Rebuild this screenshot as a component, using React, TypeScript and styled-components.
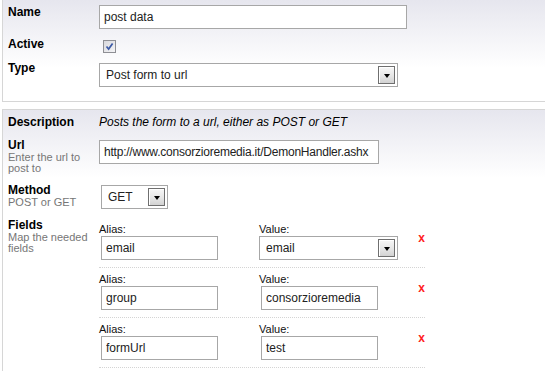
import React from 'react';
import styled, { createGlobalStyle } from 'styled-components';

type FieldMapping = {
  alias: string;
  value: string;
  isSelect?: boolean;
};

const fields: FieldMapping[] = [
  { alias: 'email', value: 'email', isSelect: true },
  { alias: 'group', value: 'consorzioremedia' },
  { alias: 'formUrl', value: 'test' },
];

const GlobalStyle = createGlobalStyle`
  html, body {
    margin: 0;
    padding: 0;
    background: #ffffff;
    overflow: hidden;
  }

  body {
    font-family: "Liberation Sans", Arial, sans-serif;
    font-size: 12px;
    color: #000000;
  }
`;

const Select: React.FC<{ value: string; width: number; offset?: number }> = ({
  value,
  width,
  offset = 0,
}) => (
  <SelectBox $width={width} $offset={offset} role="combobox" aria-expanded={false}>
    <SelectValue>{value}</SelectValue>
    <DropButton>
      <Caret />
    </DropButton>
  </SelectBox>
);

const CheckBox: React.FC<{ checked?: boolean }> = ({ checked }) => (
  <CheckFrame role="checkbox" aria-checked={!!checked}>
    {checked && (
      <svg width="11" height="11" viewBox="0 0 11 11">
        <path
          d="M2.5 5.5 L4.6 8 L8.6 2.4"
          fill="none"
          stroke="#3c5aa6"
          strokeWidth="1.7"
        />
      </svg>
    )}
  </CheckFrame>
);

export default function App() {
  return (
    <Page>
      <GlobalStyle />
      <Panel $cropped $gap={8}>
        <Row>
          <LabelCell>
            <Title>Name</Title>
          </LabelCell>
          <Control>
            <TextInput $width={308} defaultValue="post data" />
          </Control>
        </Row>
        <Row>
          <LabelCell>
            <Title>Active</Title>
          </LabelCell>
          <Control>
            <CheckBox checked />
          </Control>
        </Row>
        <Row>
          <LabelCell>
            <Title>Type</Title>
          </LabelCell>
          <Control $top={2}>
            <Select value="Post form to url" width={299} />
          </Control>
        </Row>
      </Panel>

      <Panel $gap={9}>
        <Row>
          <LabelCell>
            <Title>Description</Title>
          </LabelCell>
          <Control>
            <Description>
              Posts the form to a url, either as POST or GET
            </Description>
          </Control>
        </Row>
        <Row>
          <LabelCell>
            <Title>Url</Title>
            <Hint>Enter the url to post to</Hint>
          </LabelCell>
          <Control $top={2}>
            <TextInput
              $width={280}
              $tight
              defaultValue="http://www.consorzioremedia.it/DemonHandler.ashx"
            />
          </Control>
        </Row>
        <Row>
          <LabelCell>
            <Title>Method</Title>
            <Hint>POST or GET</Hint>
          </LabelCell>
          <Control $top={2}>
            <Select value="GET" width={67} offset={2} />
          </Control>
        </Row>
        <Row>
          <LabelCell>
            <Title>Fields</Title>
            <Hint>Map the needed fields</Hint>
          </LabelCell>
          <FieldTable>
            {fields.map((field) => (
              <FieldRow key={field.alias}>
                <FieldCell>
                  <SmallLabel>Alias:</SmallLabel>
                  <TextInput $width={117} $offset={2} defaultValue={field.alias} />
                </FieldCell>
                <FieldCell>
                  <SmallLabel>Value:</SmallLabel>
                  {field.isSelect ? (
                    <Select value={field.value} width={139} />
                  ) : (
                    <TextInput $width={117} $offset={2} defaultValue={field.value} />
                  )}
                </FieldCell>
                <RemoveButton type="button" aria-label="Remove field">
                  x
                </RemoveButton>
              </FieldRow>
            ))}
          </FieldTable>
        </Row>
      </Panel>
    </Page>
  );
}

const Page = styled.div`
  width: 545px;
  height: 371px;
  padding-left: 2px;
  box-sizing: border-box;
  overflow: hidden;
`;

const Panel = styled.section<{ $cropped?: boolean; $gap: number }>`
  width: 600px;
  box-sizing: border-box;
  border: 1px solid #d6d6d6;
  border-top-width: ${({ $cropped }) => ($cropped ? '0' : '1px')};
  background: linear-gradient(to bottom, #e6e6ee 0, #ffffff 68px);
  padding: 5px 0 14px 5px;
  display: flex;
  flex-direction: column;
  gap: ${({ $gap }) => $gap}px;

  & + & {
    margin-top: 7px;
  }
`;

const Row = styled.div`
  display: flex;
  align-items: flex-start;
`;

const LabelCell = styled.div`
  width: 91px;
  flex-shrink: 0;
  display: flex;
  flex-direction: column;
`;

const Title = styled.div`
  font-weight: bold;
  font-size: 12px;
  line-height: 14px;
`;

const Hint = styled.div`
  font-size: 11px;
  line-height: 11px;
  color: #767676;
`;

const Control = styled.div<{ $top?: number }>`
  display: flex;
  flex-direction: column;
  align-items: flex-start;
  padding-top: ${({ $top }) => $top ?? 0}px;
`;

const Description = styled.div`
  font-style: italic;
  font-size: 12px;
  line-height: 14px;
`;

const TextInput = styled.input<{ $width: number; $offset?: number; $tight?: boolean }>`
  box-sizing: border-box;
  width: ${({ $width }) => $width}px;
  height: 24px;
  margin: 0 0 0 ${({ $offset }) => $offset ?? 0}px;
  padding: 0 4px;
  border: 1px solid #a7a7a7;
  border-radius: 0;
  background: #ffffff;
  font-family: "Liberation Sans", Arial, sans-serif;
  font-size: 12px;
  letter-spacing: ${({ $tight }) => ($tight ? '-0.22px' : 'normal')};
  color: #222222;
  outline: none;
`;

const SelectBox = styled.div<{ $width: number; $offset: number }>`
  box-sizing: border-box;
  width: ${({ $width }) => $width}px;
  height: 24px;
  margin-left: ${({ $offset }) => $offset}px;
  border: 1px solid #a7a7a7;
  background: #ffffff;
  display: flex;
  align-items: center;
  padding: 0 2px 0 6px;
`;

const SelectValue = styled.span`
  flex: 1;
  font-size: 12px;
  color: #222222;
  white-space: nowrap;
  overflow: hidden;
`;

const DropButton = styled.span`
  box-sizing: border-box;
  width: 17px;
  height: 18px;
  border: 1px solid #6f6f6f;
  background: linear-gradient(to bottom, #f7f7f7 0%, #e6e6e6 55%, #d2d2d2 100%);
  box-shadow: inset 1px 1px 0 #ffffff;
  display: flex;
  align-items: center;
  justify-content: center;
  padding-top: 1px;
`;

const Caret = styled.span`
  width: 0;
  height: 0;
  border-left: 3.5px solid transparent;
  border-right: 3.5px solid transparent;
  border-top: 4px solid #000000;
`;

const CheckFrame = styled.span`
  box-sizing: border-box;
  width: 13px;
  height: 13px;
  margin: 3px 0 0 4px;
  border: 1px solid #8e8f94;
  background: linear-gradient(135deg, #d8d8dc 0%, #f4f4f6 100%);
  display: flex;
  align-items: center;
  justify-content: center;
`;

const FieldTable = styled.div`
  width: 326px;
  display: flex;
  flex-direction: column;
`;

const FieldRow = styled.div`
  display: grid;
  grid-template-columns: 160px 1fr auto;
  padding: 5px 0 7px;
  border-bottom: 1px dotted #d4d4d4;
`;

const FieldCell = styled.div`
  display: flex;
  flex-direction: column;
  align-items: flex-start;
`;

const SmallLabel = styled.label`
  font-size: 11px;
  line-height: 13px;
  color: #111111;
`;

const RemoveButton = styled.button`
  align-self: start;
  margin: 0;
  padding: 9px 0 0;
  border: none;
  background: none;
  font-family: "Liberation Sans", Arial, sans-serif;
  font-weight: bold;
  font-size: 12px;
  line-height: 12px;
  color: #ff2020;
  cursor: pointer;
`;
